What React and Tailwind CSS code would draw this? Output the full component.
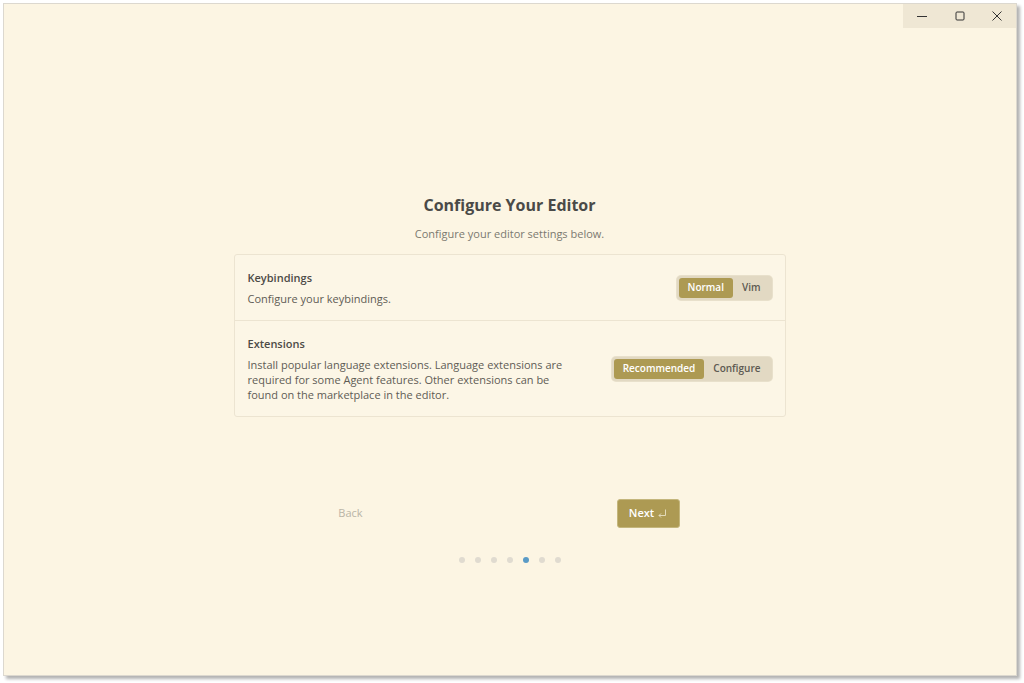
import React, { useState } from 'react';

const font = { fontFamily: '"Open Sans", "Noto Sans", sans-serif' };

const Segmented = ({ options, value, onChange }) => (
    <div className="flex rounded-[4px] bg-[#e2d9c3] p-[2px] shadow-[0_0_0_1px_#e8e0cb]">
        {options.map((o) => (
            <button
                key={o}
                onClick={() => onChange(o)}
                className={
                    o === value
                        ? 'h-[20px] rounded-[3px] bg-[#ad9a53] px-[9px] text-[10px] font-semibold text-white'
                        : 'h-[20px] rounded-[3px] px-[9px] text-[10px] font-semibold text-[#5d5a52]'
                }
            >
                {o}
            </button>
        ))}
    </div>
);

const ReturnIcon = () => (
    <svg width="9" height="9" viewBox="0 0 9 9" fill="none" stroke="#e9e1c4" strokeWidth="0.9">
        <path d="M7.5 0.5v6h-6.5" />
        <path d="M3 4.5l-2 2 2 2" />
    </svg>
);

export default function App() {
    const [keys, setKeys] = useState('Normal');
    const [ext, setExt] = useState('Recommended');
    const step = 4;

    return (
        <div className="h-[683px] w-[1024px] overflow-hidden bg-white pl-[3px] pt-[3px]" style={font}>
            <div className="flex h-[673px] w-[1014px] flex-col border border-[#dcd8cf] bg-[#fcf5e3] shadow-[3px_3px_3px_rgba(0,0,0,0.3)]">
                {/* title bar */}
                <div className="flex justify-end">
                    <div className="flex h-[24px] w-[113px] items-center bg-[#efe7d4] text-[#333]">
                        <div className="flex w-[38px] justify-center">
                            <svg width="10" height="10" viewBox="0 0 10 10"><path d="M0 5.5h10" stroke="#333" strokeWidth="1" /></svg>
                        </div>
                        <div className="flex w-[38px] justify-center">
                            <svg width="10" height="10" viewBox="0 0 10 10"><rect x="1" y="1" width="8" height="8" rx="1" fill="none" stroke="#333" strokeWidth="1" /></svg>
                        </div>
                        <div className="flex w-[38px] justify-center">
                            <svg width="10" height="10" viewBox="0 0 10 10"><path d="M0.5 0.5l9 9M9.5 0.5l-9 9" stroke="#333" strokeWidth="1" /></svg>
                        </div>
                    </div>
                </div>

                <div className="flex flex-col items-center pt-[166px] pr-[1px]">
                    <h1 className="text-[16px] font-bold leading-[22px] text-[#4a4a48]">Configure Your Editor</h1>
                    <p className="mt-[10px] text-[11px] leading-[15px] text-[#7b7970]">Configure your editor settings below.</p>

                    <div className="mt-[13px] w-[552px] rounded-[3px] border border-[#ece4d1] bg-[#fcf6e6]">
                        <div className="flex h-[66px] items-center justify-between border-b border-[#ece4d1] pl-[13px] pr-[13px]">
                            <div>
                                <div className="text-[11px] font-semibold leading-[15px] text-[#4d4b46]">Keybindings</div>
                                <div className="mt-[6px] text-[11px] leading-[15px] text-[#5f5c55]">Configure your keybindings.</div>
                            </div>
                            <Segmented options={['Normal', 'Vim']} value={keys} onChange={setKeys} />
                        </div>
                        <div className="flex h-[95px] items-center justify-between pl-[13px] pr-[13px]">
                            <div className="w-[326px]">
                                <div className="text-[11px] font-semibold leading-[15px] text-[#4d4b46]">Extensions</div>
                                <div className="mt-[6px] text-[11px] leading-[15px] text-[#5f5c55]">
                                    Install popular language extensions. Language extensions are required for some Agent features. Other extensions can be found on the marketplace in the editor.
                                </div>
                            </div>
                            <Segmented options={['Recommended', 'Configure']} value={ext} onChange={setExt} />
                        </div>
                    </div>

                    <div className="mt-[82px] flex w-[552px] items-center pl-[86px]">
                        <button className="h-[29px] w-[62px] text-[11px] text-[#b9b4a6]">Back</button>
                        <button className="ml-[235px] flex h-[29px] w-[63px] items-center justify-center gap-[4px] rounded-[3px] border border-[#c4b67c] bg-[#ad9a53] text-[11px] font-semibold text-white">
                            Next <ReturnIcon />
                        </button>
                    </div>

                    <div className="mt-[29px] flex gap-[10px]">
                        {[0, 1, 2, 3, 4, 5, 6].map((i) => (
                            <div
                                key={i}
                                className={i === step ? 'h-[6px] w-[6px] rounded-full bg-[#5a9bc6]' : 'h-[6px] w-[6px] rounded-full bg-[#e0dbd0]'}
                            />
                        ))}
                    </div>
                </div>
            </div>
        </div>
    );
}
